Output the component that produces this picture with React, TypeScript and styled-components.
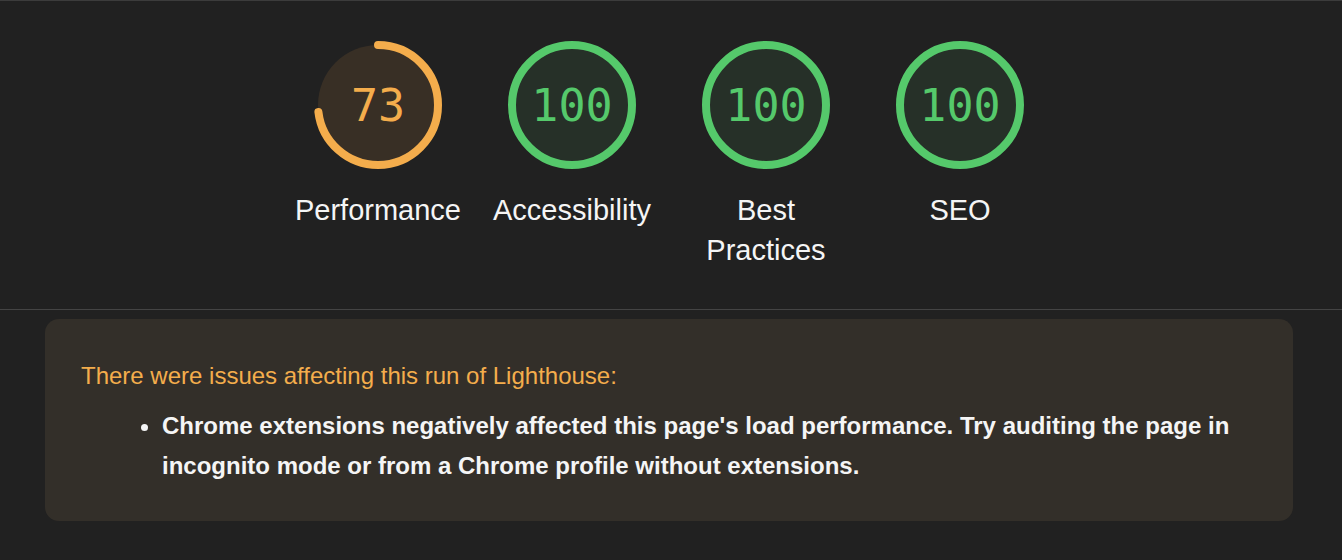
import React from "react";
import styled, { createGlobalStyle } from "styled-components";

const Global = createGlobalStyle`
  html, body { margin: 0; padding: 0; background: #212121; }
  body { font-family: "Liberation Sans", Arial, sans-serif; color: #f5f5f5; }
`;

const Page = styled.div`
  width: 1342px;
  height: 560px;
  background: #212121;
  border-top: 1px solid #3c3c3c;
  box-sizing: border-box;
  display: flex;
  flex-direction: column;
`;

const Scores = styled.div`
  display: flex;
  justify-content: center;
  padding: 40px 4px 0 0;
  height: 268px;
  border-bottom: 1px solid #444444;
`;

const GaugeItem = styled.div`
  width: 194px;
  display: flex;
  flex-direction: column;
  align-items: center;
`;

const GaugeBox = styled.div`
  position: relative;
  width: 128px;
  height: 128px;
`;

const GaugeNumber = styled.div<{ $color: string }>`
  position: absolute;
  inset: 0;
  display: flex;
  align-items: center;
  justify-content: center;
  font-family: "DejaVu Sans Mono", "Liberation Mono", monospace;
  font-size: 45px;
  color: ${(p) => p.$color};
`;

const Label = styled.div`
  margin-top: 21px;
  font-size: 29px;
  line-height: 40px;
  text-align: center;
  color: #f5f5f5;
  max-width: 170px;
`;

const Card = styled.div`
  margin: 9px 49px 0 45px;
  height: 202px;
  box-sizing: border-box;
  background: #332f29;
  border-radius: 14px;
  padding: 42px 36px 0 36px;
`;

const Title = styled.div`
  color: #f4ad4c;
  font-size: 24px;
  line-height: 30px;
`;

const List = styled.ul`
  margin: 15px 0 0 0;
  padding-left: 81px;
  font-weight: bold;
  font-size: 24px;
  line-height: 40px;
  color: #f5f5f5;
`;

type G = { score: number; label: string };
const gauges: G[] = [
  { score: 73, label: "Performance" },
  { score: 100, label: "Accessibility" },
  { score: 100, label: "Best Practices" },
  { score: 100, label: "SEO" },
];

function Gauge({ score, label }: G) {
  const good = score >= 90;
  const color = good ? "#55c96b" : "#f4ad4c";
  const fill = good ? "#263028" : "#382f25";
  const r = 60;
  const c = 2 * Math.PI * r;
  return (
    <GaugeItem>
      <GaugeBox>
        <svg width="128" height="128" viewBox="0 0 128 128">
          <circle cx="64" cy="64" r={r} fill={fill} />
          <circle
            cx="64"
            cy="64"
            r={r}
            fill="none"
            stroke={color}
            strokeWidth="8"
            strokeLinecap="round"
            strokeDasharray={`${(score / 100) * c} ${c}`}
            transform="rotate(-90 64 64)"
          />
        </svg>
        <GaugeNumber $color={color}>{score}</GaugeNumber>
      </GaugeBox>
      <Label>{label}</Label>
    </GaugeItem>
  );
}

export default function App() {
  return (
    <>
      <Global />
      <Page>
        <Scores>
          {gauges.map((g) => (
            <Gauge key={g.label} {...g} />
          ))}
        </Scores>
        <Card>
          <Title>There were issues affecting this run of Lighthouse:</Title>
          <List>
            <li>
              Chrome extensions negatively affected this page's load performance. Try auditing the page in incognito
              mode or from a Chrome profile without extensions.
            </li>
          </List>
        </Card>
      </Page>
    </>
  );
}
